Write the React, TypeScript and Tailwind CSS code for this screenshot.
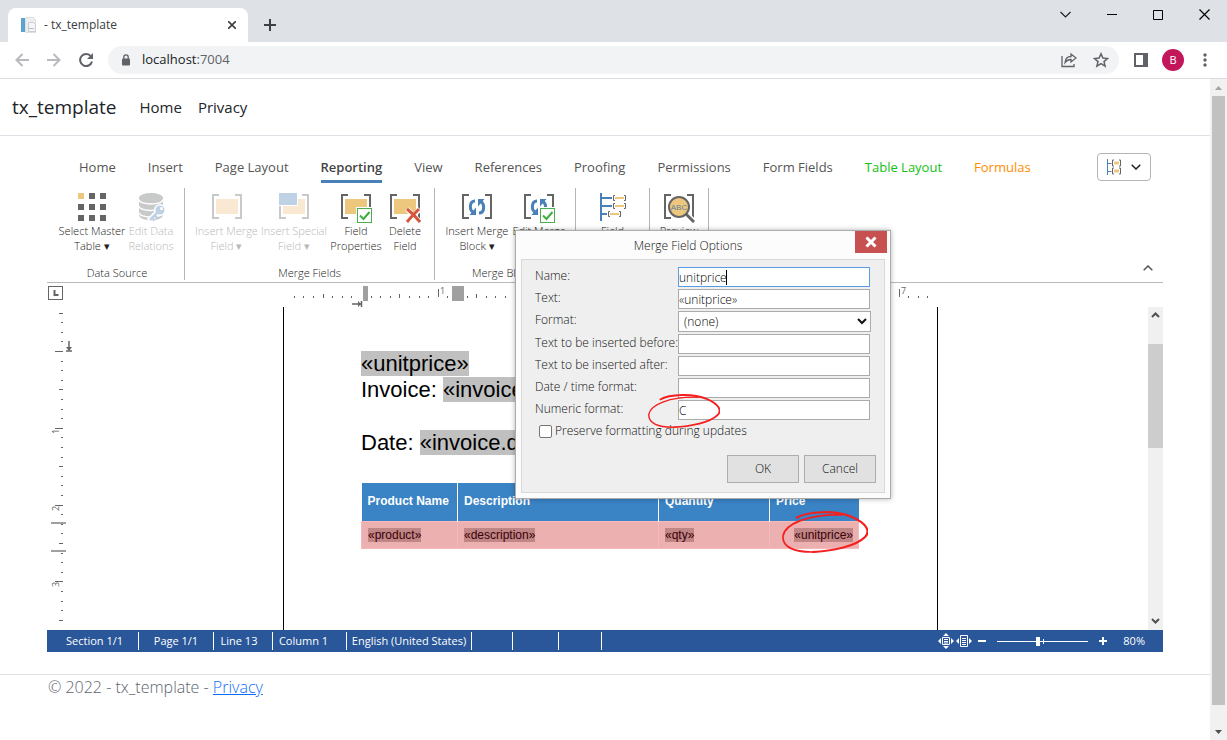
import type { ReactNode } from 'react';
import clsx from 'clsx';

const menuTabs = [
  { label: 'Home' },
  { label: 'Insert' },
  { label: 'Page Layout' },
  { label: 'Reporting', active: true },
  { label: 'View' },
  { label: 'References' },
  { label: 'Proofing' },
  { label: 'Permissions' },
  { label: 'Form Fields' },
  { label: 'Table Layout', color: 'text-[#13c113]' },
  { label: 'Formulas', color: 'text-[#ff8c00]' },
];

/* ---------- Ribbon icons ---------- */

const Icon = ({ children }: { children: ReactNode }) => (
  <svg className="h-8 w-8 shrink-0" viewBox="0 0 32 32" fill="none">
    {children}
  </svg>
);

const Brackets = ({ color = '#656565' }: { color?: string }) => (
  <path d="M8 4H2v23h6M24 4h6v23h-6" stroke={color} strokeWidth="2" />
);

const CheckBadge = () => (
  <>
    <rect x="16" y="16" width="16" height="16" fill="#fff" />
    <rect x="17.5" y="17.5" width="14" height="14" fill="#fff" stroke="#4cae4c" />
    <path d="M20 24.5l3.5 3.5 6-7" stroke="#3fae3f" strokeWidth="2" />
  </>
);

const CycleArrows = () => (
  <>
    <path d="M14 10c-6 0-6 10-1 11.500" stroke="#4a80b8" strokeWidth="3" />
    <path d="M18 22c6 0 6-10 1-11.500" stroke="#4a80b8" strokeWidth="3" />
    <path d="M15 16.500v7.500H8.500zM17 15.500V8h6.500z" fill="#4a80b8" />
  </>
);

const MasterTableIcon = () => (
  <Icon>
    {[2, 13, 24].map((y) =>
      [2, 13, 24].map((x) => (
        <rect key={`${x}-${y}`} x={x} y={y} width="6" height="6" fill={x === 2 && y === 2 ? '#eec77f' : '#656565'} />
      ))
    )}
  </Icon>
);

const DatabaseIcon = () => (
  <Icon>
    <path d="M4 7v17c0 3 6 5.500 12 5.500S28 27 28 24V7z" fill="#c8cac9" />
    <ellipse cx="16" cy="7" rx="12" ry="5" fill="#c8cac9" />
    <path
      d="M4 8.500c0 3 6 4.500 12 4.500s12-1.500 12-4.500M4 15c0 3 6 4.500 12 4.500s12-1.500 12-4.500M4 21.500c0 3 6 4.500 12 4.500s12-1.500 12-4.500"
      stroke="#fff"
      strokeWidth="1.500"
    />
    <path d="M23 21l-9 9" stroke="#fff" strokeWidth="6" />
    <circle cx="25" cy="19" r="6" fill="#fff" />
    <circle cx="25" cy="19" r="4.500" fill="#bfd2e5" />
    <path d="M23 21l-8 8M17 27l2.500 2.500M19.500 24.500l2.500 2.500" stroke="#bfd2e5" strokeWidth="2.500" />
    <circle cx="26.500" cy="17.500" r="1.500" fill="#fff" />
  </Icon>
);

const MergeFieldIcon = () => (
  <Icon>
    <Brackets color="#c8cac9" />
    <rect x="5" y="8" width="22" height="15" fill="#f9e9d2" />
  </Icon>
);

const SpecialFieldIcon = () => (
  <Icon>
    <Brackets color="#c8cac9" />
    <rect x="5" y="8" width="22" height="15" fill="#f9e9d2" />
    <rect x="0" y="1" width="20" height="14" fill="#fff" />
    <rect x="1" y="2" width="18" height="12" fill="#bfd2e5" />
  </Icon>
);

const FieldPropertiesIcon = () => (
  <Icon>
    <Brackets />
    <rect x="5" y="8" width="22" height="15" fill="#eec77f" />
    <CheckBadge />
  </Icon>
);

const DeleteFieldIcon = () => (
  <Icon>
    <Brackets />
    <rect x="5" y="8" width="22" height="15" fill="#eec77f" />
    <path d="M18 18l13 13M31 18L18 31" stroke="#fff" strokeWidth="5" />
    <path d="M18 18c4 3 9 8 13 13M30 18c-4 4-8 8-12 13" stroke="#d6553c" strokeWidth="3" />
  </Icon>
);

const MergeBlockIcon = () => (
  <Icon>
    <Brackets />
    <CycleArrows />
  </Icon>
);

const EditBlockIcon = () => (
  <Icon>
    <Brackets />
    <CycleArrows />
    <CheckBadge />
  </Icon>
);

const NavigatorIcon = () => (
  <Icon>
    <path d="M4 2v28M4 7h11M4 15h11M4 23h6" stroke="#4a80b8" strokeWidth="2" />
    <path d="M18 7h9M18 15h9M13 23h9" stroke="#eec77f" strokeWidth="2" />
    <path
      d="M18 4.500h-1.500v5H18M27 4.500h1.500v5H27M18 12.500h-1.500v5H18M27 12.500h1.500v5H27M13 20.500h-1.500v5H13M22 20.500h1.500v5H22"
      stroke="#656565"
    />
  </Icon>
);

const PreviewIcon = () => (
  <Icon>
    <Brackets />
    <path d="M23 23l8 8" stroke="#fff" strokeWidth="6" />
    <circle cx="16" cy="16" r="12" fill="#fff" />
    <circle cx="16" cy="16" r="10" fill="#eec77f" stroke="#656565" strokeWidth="2" />
    <path d="M23 23l8 8" stroke="#656565" strokeWidth="3" />
    <text x="16" y="19" textAnchor="middle" fontSize="8" fontFamily="Liberation Sans, sans-serif" fill="#5d8299">
      ABC
    </text>
  </Icon>
);

/* ---------- Browser chrome ---------- */

const TabStrip = () => (
  <div className="flex h-[42px] items-end bg-[#dee1e6] pl-2">
    <div className="relative flex h-[34px] w-60 items-center rounded-t-lg bg-white pl-3 pr-2">
      <svg className="h-4 w-4" viewBox="0 0 16 16">
        <rect x="1" y="1" width="4" height="14" fill="#5ba4cf" />
        <path d="M5.500.5h8l2 2v13h-10z" fill="#edeef0" stroke="#dcdee0" />
        <path d="M8.500 5.500h5l2 2v7h-7z" fill="#f4f5f6" stroke="#c9ccd0" />
        <path d="M8 11.500h6" stroke="#b9bec4" />
      </svg>
      <span className="ml-2 flex-1 text-xs text-[#3c4043]">- tx_template</span>
      <button aria-label="Close tab" className="flex h-4 w-4 items-center justify-center">
        <svg className="h-2 w-2" viewBox="0 0 8 8">
          <path d="M0 0l8 8M8 0L0 8" stroke="#3c4043" strokeWidth="1.600" />
        </svg>
      </button>
    </div>
    <button aria-label="New tab" className="mb-[11px] ml-4">
      <svg className="h-3 w-3" viewBox="0 0 12 12">
        <path d="M6 0v12M0 6h12" stroke="#3c4043" strokeWidth="2" />
      </svg>
    </button>
    <div className="mb-[22px] ml-auto mr-[17px] flex items-center gap-9">
      <button aria-label="Search tabs">
        <svg className="h-[11px] w-[11px]" viewBox="0 0 11 11" fill="none">
          <path d="M.5 3l5 5 5-5" stroke="#222" strokeWidth="1.200" />
        </svg>
      </button>
      <button aria-label="Minimize">
        <svg className="h-[11px] w-[10px]" viewBox="0 0 10 11">
          <path d="M0 5.500h10" stroke="#000" />
        </svg>
      </button>
      <button aria-label="Maximize">
        <svg className="h-[10px] w-[10px]" viewBox="0 0 10 10" fill="none">
          <path d="M.5.5h9v9h-9z" stroke="#000" />
        </svg>
      </button>
      <button aria-label="Close">
        <svg className="h-[11px] w-[11px]" viewBox="0 0 11 11">
          <path d="M.5.5l10 10M10.500.5l-10 10" stroke="#000" strokeWidth="1.200" />
        </svg>
      </button>
    </div>
  </div>
);

const AddressBar = () => (
  <div className="flex h-[37px] items-center border-b border-[#dadce0] bg-white pl-[15px] pr-3">
    <div className="flex w-[93px] gap-[18px]">
      <svg className="h-[14px] w-[14px]" viewBox="0 0 14 14" fill="none">
        <path d="M14 7H1.500M7.500 1l-6 6 6 6" stroke="#b8babd" strokeWidth="2" />
      </svg>
      <svg className="h-[14px] w-[14px]" viewBox="0 0 14 14" fill="none">
        <path d="M0 7h12.500M6.500 1l6 6-6 6" stroke="#b8babd" strokeWidth="2" />
      </svg>
      <svg className="h-[14px] w-[14px]" viewBox="0 0 14 14" fill="none">
        <path d="M12 3.500A6 6 0 1 0 13 8.500" stroke="#5f6368" strokeWidth="2" />
        <path d="M14 0v6H8z" fill="#5f6368" />
      </svg>
    </div>
    <div className="flex h-7 flex-1 items-center rounded-full bg-[#f1f3f4] pl-[14px] pr-[10px]">
      <svg className="h-3 w-2" viewBox="0 0 8 12" fill="none">
        <rect x="0" y="4.500" width="8" height="7" rx="1" fill="#5f6368" />
        <path d="M1.800 5V3a2.200 2.200 0 0 1 4.400 0v2" stroke="#5f6368" strokeWidth="1.300" />
      </svg>
      <span className="ml-3 text-[13px] text-[#202124]">
        localhost<span className="text-[#5f6368]">:7004</span>
      </span>
      <div className="ml-auto flex items-center gap-4">
        <svg className="h-4 w-4" viewBox="0 0 16 16" fill="none" stroke="#5f6368" strokeWidth="1.300">
          <path d="M1 4v10.500h12V12" />
          <path d="M10 2l5 4-5 4V7.500c-3 0-4.500 1-6 3 .3-3.500 2.500-6 6-6z" />
        </svg>
        <svg className="h-4 w-4" viewBox="0 0 16 16" fill="none">
          <path
            d="M8 1.800l1.900 4.300 4.600.4-3.500 3.100 1.100 4.600L8 11.700l-4.100 2.500L5 9.600 1.500 6.500l4.600-.4z"
            stroke="#5f6368"
            strokeWidth="1.500"
          />
        </svg>
      </div>
    </div>
    <svg className="ml-[15px] h-[14px] w-[14px]" viewBox="0 0 14 14" fill="none">
      <rect width="14" height="14" fill="#5f6368" />
      <rect x="2" y="2" width="7" height="10" fill="#fff" />
    </svg>
    <span className="ml-[14px] flex h-[22px] w-[22px] items-center justify-center rounded-full bg-[#c2185b] text-[11px] text-white">
      B
    </span>
    <svg className="ml-[15px] h-4 w-4" viewBox="0 0 16 16" fill="#5f6368">
      <circle cx="6" cy="3" r="1.700" />
      <circle cx="6" cy="8" r="1.700" />
      <circle cx="6" cy="13" r="1.700" />
    </svg>
  </div>
);

const PageScrollbar = () => (
  <div className="flex w-[17px] flex-col items-center bg-[#f1f1f1]">
    <svg className="h-[17px] w-[17px]" viewBox="0 0 17 17">
      <path d="M5 11h7L8.500 7z" fill="#a3a3a3" />
    </svg>
    <div className="w-[13px] flex-1 bg-[#c1c1c1]" />
    <svg className="mt-[18px] h-[17px] w-[17px]" viewBox="0 0 17 17">
      <path d="M5 7h7l-3.500 4z" fill="#505050" />
    </svg>
  </div>
);

/* ---------- Ribbon ---------- */

type RibbonButtonProps = { icon: ReactNode; lines: string[]; width: string; disabled?: boolean };

const RibbonButton = ({ icon, lines, width, disabled }: RibbonButtonProps) => (
  <button
    disabled={disabled}
    className={clsx(
      'flex flex-col items-center whitespace-nowrap text-[11px] font-light leading-[15px]',
      width,
      disabled ? 'text-[#b8b8b8]' : 'text-[#222]'
    )}
  >
    {icon}
    {lines.map((line) => (
      <span key={line}>{line}</span>
    ))}
  </button>
);

const RibbonGroup = ({ title, children }: { title: string; children: ReactNode }) => (
  <div className="flex flex-col items-center border-r border-[#b5b5b5] px-2 pt-[3px]">
    <div className="flex flex-1">{children}</div>
    <div className="text-[11px] font-light leading-[15px] text-[#222]">{title}</div>
  </div>
);

const Ribbon = () => (
  <>
    <div className="flex h-[52px] items-center pl-4 pr-3 pt-[10px]">
      <nav className="flex flex-1 text-[13px]">
        {menuTabs.map((tab) => (
          <button key={tab.label} className={clsx('px-4', tab.color ?? 'text-[#555]')}>
            <span
              className={clsx(
                'block h-8 whitespace-nowrap leading-8',
                tab.active && 'border-b-[3px] border-[#4a80b8] font-semibold text-[#444]'
              )}
            >
              {tab.label}
            </span>
          </button>
        ))}
      </nav>
      <button
        aria-label="Layout"
        className="flex h-7 w-[54px] items-center justify-center gap-[10px] rounded-sm border border-[#b5b5b5]"
      >
        <svg className="h-4 w-[14px]" viewBox="0 0 14 16" fill="none">
          <path d="M.5 0v16M1 4.500h3.500M1 12.500h3.500" stroke="#4a80b8" />
          <path d="M7 1H5.500v6H7M12 1h1.500v6H12M7 9H5.500v6H7M12 9h1.500v6H12" stroke="#656565" />
          <path d="M7 2.500h5v3H7zM7 10.500h5v3H7z" fill="#eec77f" />
        </svg>
        <svg className="h-[6px] w-[10px]" viewBox="0 0 10 6" fill="none">
          <path d="M.7.700L5 5 9.300.7" stroke="#222" strokeWidth="1.500" />
        </svg>
      </button>
    </div>
    <div className="flex items-end justify-between border-b border-[#b9b9b9] pb-[2px] pr-[10px]">
      <div className="flex h-[92px] pl-[3px]">
        <RibbonGroup title="Data Source">
          <RibbonButton icon={<MasterTableIcon />} lines={['Select Master', 'Table ▾']} width="w-[68px]" />
          <RibbonButton icon={<DatabaseIcon />} lines={['Edit Data', 'Relations']} width="w-[50px]" disabled />
        </RibbonGroup>
        <RibbonGroup title="Merge Fields">
          <RibbonButton icon={<MergeFieldIcon />} lines={['Insert Merge', 'Field ▾']} width="w-[67px]" disabled />
          <RibbonButton icon={<SpecialFieldIcon />} lines={['Insert Special', 'Field ▾']} width="w-[68px]" disabled />
          <RibbonButton icon={<FieldPropertiesIcon />} lines={['Field', 'Properties']} width="w-[56px]" />
          <RibbonButton icon={<DeleteFieldIcon />} lines={['Delete', 'Field']} width="w-[42px]" />
        </RibbonGroup>
        <RibbonGroup title="Merge Blocks">
          <RibbonButton icon={<MergeBlockIcon />} lines={['Insert Merge', 'Block ▾']} width="w-[68px]" />
          <RibbonButton icon={<EditBlockIcon />} lines={['Edit Merge', 'Blocks']} width="w-[56px]" />
        </RibbonGroup>
        <RibbonGroup title="View">
          <RibbonButton icon={<NavigatorIcon />} lines={['Field', 'Navigator']} width="w-[57px]" />
        </RibbonGroup>
        <RibbonGroup title="Preview">
          <RibbonButton icon={<PreviewIcon />} lines={['Preview', 'Results']} width="w-[42px]" />
        </RibbonGroup>
      </div>
      <button aria-label="Collapse ribbon" className="mb-[9px]">
        <svg className="h-[6px] w-[10px]" viewBox="0 0 10 6" fill="none">
          <path d="M.7 5.300L5 1l4.300 4.300" stroke="#555" strokeWidth="1.500" />
        </svg>
      </button>
    </div>
  </>
);

/* ---------- Rulers ---------- */

// 80% zoom: an inch is 76.8px, split in eighths
const STEP = 9.6;
const range = (from: number, to: number) => Array.from({ length: to - from + 1 }, (_, i) => from + i);

const HorizontalRuler = () => (
  <div className="flex h-6">
    <svg className="h-6 w-[900px]" viewBox="0 0 900 24">
      <rect x="1.500" y="3.500" width="14" height="13" fill="none" stroke="#656565" />
      <path d="M7.500 7v5h4" fill="none" stroke="#656565" strokeWidth="2" />
      {range(-7, 59)
        .filter((n) => n !== 0)
        .map((n) => {
          const x = Math.round(314 + n * STEP);
          const inch = n % 8 === 0;
          const height = inch ? 8 : n % 4 === 0 ? 4 : 2;
          return (
            <g key={n}>
              <rect x={x} y={(inch ? 14 : 15) - height} width="1" height={height} fill="#656565" />
              {inch && (
                <text x={x + 2} y="11" fontSize="9" fill="#656565">
                  {n / 8}
                </text>
              )}
            </g>
          );
        })}
      <rect x="316" y="3" width="5" height="15" fill="#a0a0a0" />
      <rect x="405" y="3" width="12" height="15" fill="#a0a0a0" />
      <path d="M305 21h9M314.500 18v6" stroke="#656565" strokeWidth="1.500" />
      <path d="M311 18l3 3-3 3z" fill="#656565" />
    </svg>
  </div>
);

const VerticalRuler = () => (
  <svg className="h-[323px] w-8" viewBox="0 0 32 323">
    {range(-4, 28).map((n) => {
      const y = Math.round(44 + n * STEP);
      const inch = n % 8 === 0;
      const width = inch ? 8 : n % 4 === 0 ? 4 : 2;
      return (
        <g key={n}>
          <rect x={16 - width} y={y} width={width} height="1" fill="#656565" />
          {inch && n > 0 && (
            <text transform={`translate(12 ${y + 6}) rotate(-90)`} fontSize="9" fill="#656565">
              {n / 8}
            </text>
          )}
        </g>
      );
    })}
    <path d="M4 216h15M4 244h15" stroke="#a0a0a0" strokeWidth="2" />
    <path d="M22 34v9M19 44h6" stroke="#656565" strokeWidth="1.500" />
    <path d="M19 40h6l-3 4z" fill="#656565" />
  </svg>
);

/* ---------- Document ---------- */

const MergeField = ({ children }: { children: ReactNode }) => <span className="bg-[#c0c0c0]">{children}</span>;
const CellField = ({ children }: { children: ReactNode }) => <span className="bg-[#c08585]">{children}</span>;

const headCell = 'border-r border-white px-[6px] pb-[2px] text-left last:border-r-0';
const bodyCell = 'border border-[#f5b9b9] px-[6px] last:pr-[5px]';

const RedCircle = ({ className }: { className: string }) => (
  <svg className={clsx('pointer-events-none absolute', className)} viewBox="0 0 86 42" fill="none" preserveAspectRatio="none">
    <path d="M14 7C26 0 54-1 70 6c14 6 19 14 13 20C74 35 52 40 30 41" stroke="#f4201f" strokeWidth="2.200" />
    <path d="M30 41C12 41 0 36 1 25 3 13 26 3 60 4" stroke="#f4201f" strokeWidth="1.700" />
  </svg>
);

const DocumentArea = () => (
  <div className="flex">
    <VerticalRuler />
    <div className="flex-1 pl-[204px]">
      <div className="h-full w-[655px] border-x border-black pl-[77px] pt-[44px] font-['Liberation_Sans',Arial,sans-serif] text-black">
        <div className="text-[22px] leading-[26px]">
          <p>
            <MergeField>«unitprice»</MergeField>
          </p>
          <p>
            Invoice: <MergeField>«invoice</MergeField>
          </p>
          <p className="mt-[27px]">
            Date: <MergeField>«invoice.d</MergeField>
          </p>
        </div>
        <div className="relative mt-[27px] w-[498px]">
          <table className="w-full table-fixed border-collapse text-xs">
            <thead>
              <tr className="h-[38px] bg-[#3a83c5] text-white">
                <th className={clsx(headCell, 'w-24')}>Product Name</th>
                <th className={clsx(headCell, 'w-[201px]')}>Description</th>
                <th className={clsx(headCell, 'w-[111px]')}>Quantity</th>
                <th className={headCell}>Price</th>
              </tr>
            </thead>
            <tbody>
              <tr className="h-[27px] bg-[#edb0b0] text-[#3b0008]">
                <td className={bodyCell}>
                  <CellField>«product»</CellField>
                </td>
                <td className={bodyCell}>
                  <CellField>«description»</CellField>
                </td>
                <td className={bodyCell}>
                  <CellField>«qty»</CellField>
                </td>
                <td className={clsx(bodyCell, 'text-right')}>
                  <CellField>«unitprice»</CellField>
                </td>
              </tr>
            </tbody>
          </table>
          <RedCircle className="-right-[9px] top-7 h-[42px] w-[86px]" />
        </div>
      </div>
    </div>
    <div className="flex w-[15px] flex-col items-center bg-[#f0f0f0]">
      <svg className="h-[37px] w-[15px]" viewBox="0 0 15 37" fill="none">
        <path d="M4 10l3.500-3.500L11 10" stroke="#505050" strokeWidth="2" />
      </svg>
      <div className="h-[104px] w-full bg-[#cdcdcd]" />
      <svg className="mt-auto h-[17px] w-[15px]" viewBox="0 0 15 17" fill="none">
        <path d="M4 6l3.500 3.500L11 6" stroke="#505050" strokeWidth="2" />
      </svg>
    </div>
  </div>
);

const statusCell = 'h-[18px] whitespace-nowrap border-r border-white text-center leading-[18px]';

const StatusBar = () => (
  <div className="flex h-[22px] items-center bg-[#2a579a] text-[11px] text-white">
    <span className={clsx(statusCell, 'w-[92px] pl-1')}>Section 1/1</span>
    <span className={clsx(statusCell, 'w-[75px]')}>Page 1/1</span>
    <span className={clsx(statusCell, 'w-[59px] pr-2')}>Line 13</span>
    <span className={clsx(statusCell, 'w-[74px] pr-3')}>Column 1</span>
    <span className={clsx(statusCell, 'w-[125px]')}>English (United States)</span>
    <span className={clsx(statusCell, 'w-[41px]')} />
    <span className={clsx(statusCell, 'w-[46px]')} />
    <span className={clsx(statusCell, 'w-[43px]')} />
    <div className="ml-auto flex items-center pr-[18px]">
      <button aria-label="Fit page">
        <svg className="h-4 w-4" viewBox="0 0 16 16" fill="#fff">
          <path d="M8 0l3 3H5zM8 16l3-3H5zM0 8l3-3v6zM16 8l-3-3v6z" />
          <path d="M4.500 4.500h7v7h-7z" fill="none" stroke="#fff" />
          <path d="M6 6.500h4M6 8.500h4M6 10h4" stroke="#fff" />
        </svg>
      </button>
      <button aria-label="Fit width" className="ml-[2px]">
        <svg className="h-4 w-4" viewBox="0 0 16 16" fill="#fff">
          <path d="M0 8l3-3v6zM16 8l-3-3v6z" />
          <path d="M4.500 2.500h7v11h-7z" fill="none" stroke="#fff" />
          <path d="M6 5.500h4M6 7.500h4M6 9.500h4M6 11.500h4" stroke="#fff" />
        </svg>
      </button>
      <button aria-label="Zoom out" className="ml-[6px]">
        <svg className="h-2 w-2" viewBox="0 0 8 8">
          <path d="M0 4h8" stroke="#fff" strokeWidth="2" />
        </svg>
      </button>
      <div className="relative ml-[11px] flex w-[91px] items-center">
        <input
          type="range"
          aria-label="Zoom"
          defaultValue={45}
          className="h-px w-full appearance-none bg-white [&::-webkit-slider-thumb]:h-[9px] [&::-webkit-slider-thumb]:w-1 [&::-webkit-slider-thumb]:appearance-none [&::-webkit-slider-thumb]:bg-white"
        />
        <span className="absolute left-1/2 h-[5px] w-px bg-white" />
      </div>
      <button aria-label="Zoom in" className="ml-[11px]">
        <svg className="h-2 w-2" viewBox="0 0 8 8">
          <path d="M0 4h8M4 0v8" stroke="#fff" strokeWidth="2" />
        </svg>
      </button>
      <span className="ml-4">80%</span>
    </div>
  </div>
);

/* ---------- Merge field dialog ---------- */

const textBox = 'h-5 w-48 border bg-white text-xs text-black outline-none';

type FieldRowProps = { id: string; label: string; value?: string; focused?: boolean };

const FieldRow = ({ id, label, value = '', focused }: FieldRowProps) => (
  <div className="flex h-[22px]">
    <label htmlFor={id} className="w-[143px] whitespace-nowrap leading-[18px]">
      {label}
    </label>
    <div className="relative">
      <input
        id={id}
        type="text"
        defaultValue={value}
        className={clsx(textBox, focused ? 'border-[#569de5]' : 'border-[#ababab]')}
      />
      {focused && <span className="absolute left-12 top-[3px] h-[15px] w-px bg-black" />}
    </div>
  </div>
);

const MergeFieldDialog = () => (
  <div
    role="dialog"
    aria-labelledby="dialog-title"
    className="absolute left-[468px] top-[94px] w-[376px] border border-[#ababab] bg-[#fcfcfc] px-[5px] pb-[5px] text-xs font-light text-[#111] shadow-[0_0_5px_rgba(0,0,0,0.3)]"
  >
    <div className="-mr-[2px] flex h-7 items-start">
      <h2 id="dialog-title" className="flex-1 text-center leading-[30px]">
        Merge Field Options
      </h2>
      <button aria-label="Close dialog" className="flex h-[22px] w-8 items-center justify-center bg-[#c75050]">
        <svg className="h-3 w-3" viewBox="0 0 12 12">
          <path d="M1.500 1.500l9 9M10.500 1.500l-9 9" stroke="#fff" strokeWidth="3" />
        </svg>
      </button>
    </div>
    <div className="border border-[#d9d9d9] bg-[#efefef] pb-[9px] pl-[13px] pr-2 pt-[7px]">
      <FieldRow id="name" label="Name:" value="unitprice" focused />
      <FieldRow id="text" label="Text:" value="«unitprice»" />
      <div className="flex h-[23px]">
        <label htmlFor="format" className="w-[143px] leading-[18px]">
          Format:
        </label>
        <div className="relative">
          <select
            id="format"
            className="h-[21px] w-[193px] appearance-none border border-[#ababab] bg-white px-[5px] text-xs text-black outline-none"
          >
            <option>(none)</option>
          </select>
          <svg className="pointer-events-none absolute right-1 top-[7px] h-[7px] w-[10px]" viewBox="0 0 10 7" fill="none">
            <path d="M1 1l4 4 4-4" stroke="#111" strokeWidth="2" />
          </svg>
        </div>
      </div>
      <FieldRow id="before" label="Text to be inserted before:" />
      <FieldRow id="after" label="Text to be inserted after:" />
      <FieldRow id="date" label="Date / time format:" />
      <FieldRow id="numeric" label="Numeric format:" value="C" />
      <div className="flex h-[22px] items-center pb-1 pl-1">
        <input
          id="preserve"
          type="checkbox"
          className="h-[13px] w-[13px] appearance-none rounded-[2px] border border-[#767676] bg-white"
        />
        <label htmlFor="preserve" className="ml-[3px]">
          Preserve formatting during updates
        </label>
      </div>
      <div className="mt-[11px] flex justify-end gap-[5px]">
        <button className="h-7 w-[72px] border border-[#adadad] bg-[#e1e1e1]">OK</button>
        <button className="h-7 w-[72px] border border-[#adadad] bg-[#e1e1e1]">Cancel</button>
      </div>
    </div>
    <RedCircle className="left-[132px] top-[163px] h-[34px] w-[72px]" />
  </div>
);

const App = () => {
  return (
    <div className="flex min-h-screen flex-col bg-white font-['Open_Sans','Segoe_UI',sans-serif]">
      <TabStrip />
      <AddressBar />

      <div className="flex flex-1">
        <div className="flex min-w-0 flex-1 flex-col">
          {/* Site header */}
          <header className="flex h-[57px] items-center border-b border-[#dee2e6] pl-3 text-[#212529]">
            <a href="#" className="text-[19px]">
              tx_template
            </a>
            <nav className="ml-[23px] flex gap-4 text-[15px]">
              <a href="#">Home</a>
              <a href="#">Privacy</a>
            </nav>
          </header>

          {/* Editor */}
          <main className="relative mx-[47px]">
            <Ribbon />
            <HorizontalRuler />
            <DocumentArea />
            <StatusBar />
            <MergeFieldDialog />
          </main>

          <footer className="mt-[22px] border-t border-[#dee2e6] pl-12 text-base font-light leading-6 text-[#5c656d]">
            © 2022 - tx_template -{' '}
            <a href="#" className="text-[#0d6efd] underline">
              Privacy
            </a>
          </footer>
        </div>
        <PageScrollbar />
      </div>
    </div>
  );
};

export default App;
